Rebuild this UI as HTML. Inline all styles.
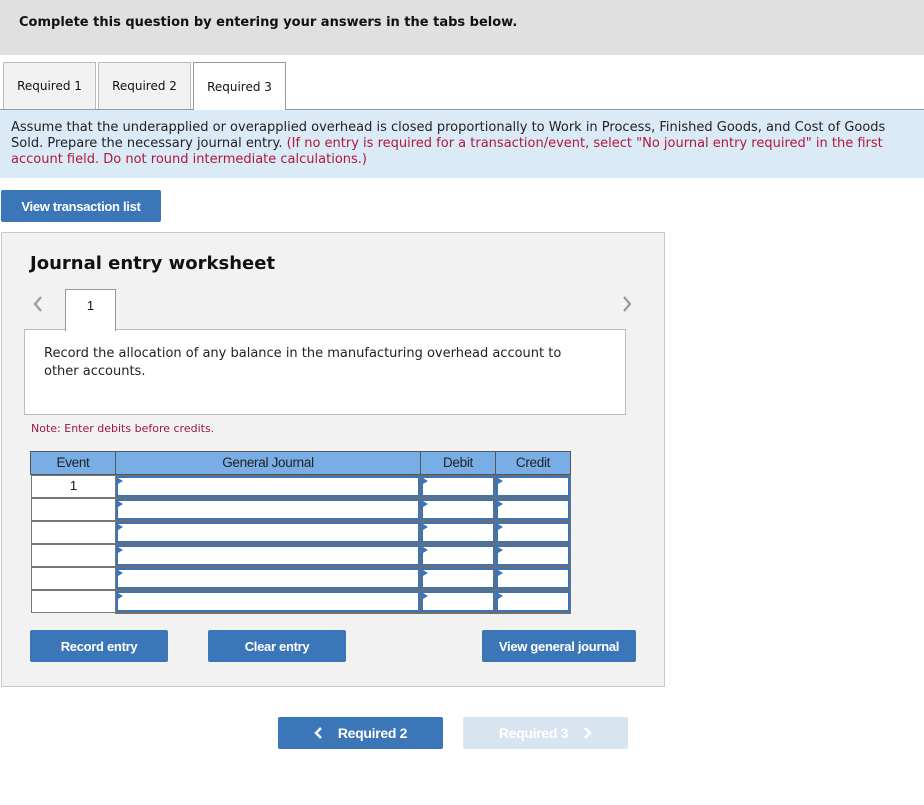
<!DOCTYPE html>
<html><head><meta charset="utf-8"><style>
*{box-sizing:border-box;margin:0;padding:0}
body{width:924px;height:805px;background:#fff;font-family:"DejaVu Sans","Liberation Sans",sans-serif;position:relative;overflow:hidden;color:#111}
.a{position:absolute}
.btn{position:absolute;background:#3a76b8;color:#fff;font-family:"Liberation Sans",sans-serif;font-weight:bold;font-size:13px;border-radius:2px;display:flex;align-items:center;justify-content:center;letter-spacing:-0.3px}
.tab{position:absolute;top:62px;height:47px;border:1px solid #bbb;border-bottom:none;background:#f2f2f2;font-size:12px;display:flex;align-items:center;justify-content:center}
.ev{position:absolute;left:31px;width:85px;height:23px;background:#fff;border:1px solid #777;font-family:"Liberation Sans",sans-serif;font-size:13px;text-align:center;line-height:20px}
.in{position:absolute;height:21px;background:#fff;border:2px solid #3d74b6}
.in:before{content:"";position:absolute;left:0;top:0;border-left:5px solid #3d74b6;border-top:3px solid transparent;border-bottom:3px solid transparent}
.th{position:absolute;top:451px;height:24px;background:#78ade6;border:1px solid #555;font-family:"Liberation Sans",sans-serif;font-size:13.5px;letter-spacing:-0.3px;text-align:center;line-height:22px;color:#222}
</style></head><body>
<div class="a" style="left:0;top:0;width:924px;height:55px;background:#e0e0e0"></div>
<div class="a" style="left:19px;top:15px;font-size:13px;font-weight:bold;color:#111">Complete this question by entering your answers in the tabs below.</div>
<div class="tab" style="left:3px;width:93px">Required 1</div>
<div class="tab" style="left:98px;width:93px">Required 2</div>
<div class="tab" style="left:193px;width:93px;background:#fff;border-color:#999;height:48px;z-index:2">Required 3</div>
<div class="a" style="left:0;top:109px;width:924px;height:69px;background:#dbeaf7;border-top:1px solid #999"></div>
<div class="a" style="left:11px;top:120px;width:905px;font-size:13px;line-height:16px;color:#222">Assume that the underapplied or overapplied overhead is closed proportionally to Work in Process, Finished Goods, and Cost of Goods Sold. Prepare the necessary journal entry. <span style="color:#b0183c">(If no entry is required for a transaction/event, select "No journal entry required" in the first account field. Do not round intermediate calculations.)</span></div>
<div class="btn" style="left:1px;top:190px;width:160px;height:32px">View transaction list</div>
<div class="a" style="left:1px;top:232px;width:664px;height:455px;background:#f2f2f2;border:1px solid #c8c8c8"></div>
<div class="a" style="left:30px;top:253px;font-size:18px;font-weight:bold;color:#111">Journal entry worksheet</div>
<svg class="a" style="left:32px;top:295px" width="12" height="18"><path d="M9 2 L3 9 L9 16" fill="none" stroke="#999" stroke-width="2.2"/></svg>
<svg class="a" style="left:621px;top:295px" width="12" height="18"><path d="M3 2 L9 9 L3 16" fill="none" stroke="#999" stroke-width="2.2"/></svg>
<div class="a" style="left:24px;top:329px;width:602px;height:86px;background:#fff;border:1px solid #bbb"></div>
<div class="a" style="left:65px;top:289px;width:51px;height:42px;background:#fff;border:1px solid #999;border-bottom:none;font-family:'Liberation Sans',sans-serif;font-size:13px;text-align:center;line-height:32px">1</div>
<div class="a" style="left:44px;top:345px;width:540px;font-size:13px;line-height:18px;color:#222">Record the allocation of any balance in the manufacturing overhead account to other accounts.</div>
<div class="a" style="left:31px;top:422px;font-size:11px;color:#a0183c">Note: Enter debits before credits.</div>
<div class="th" style="left:30px;width:86px">Event</div>
<div class="th" style="left:115px;width:306px">General Journal</div>
<div class="th" style="left:420px;width:76px">Debit</div>
<div class="th" style="left:495px;width:76px">Credit</div>
<div class="a" style="left:115px;top:475px;width:456px;height:139px;background:#6e6e6e"></div>
<div class="ev" style="top:475px">1</div>
<div class="ev" style="top:498px"></div>
<div class="ev" style="top:521px"></div>
<div class="ev" style="top:544px"></div>
<div class="ev" style="top:567px"></div>
<div class="ev" style="top:590px"></div>
<div class="in" style="left:116px;top:476px;width:304px"></div><div class="in" style="left:421px;top:476px;width:74px"></div><div class="in" style="left:496px;top:476px;width:74px"></div>
<div class="in" style="left:116px;top:499px;width:304px"></div><div class="in" style="left:421px;top:499px;width:74px"></div><div class="in" style="left:496px;top:499px;width:74px"></div>
<div class="in" style="left:116px;top:522px;width:304px"></div><div class="in" style="left:421px;top:522px;width:74px"></div><div class="in" style="left:496px;top:522px;width:74px"></div>
<div class="in" style="left:116px;top:545px;width:304px"></div><div class="in" style="left:421px;top:545px;width:74px"></div><div class="in" style="left:496px;top:545px;width:74px"></div>
<div class="in" style="left:116px;top:568px;width:304px"></div><div class="in" style="left:421px;top:568px;width:74px"></div><div class="in" style="left:496px;top:568px;width:74px"></div>
<div class="in" style="left:116px;top:591px;width:304px"></div><div class="in" style="left:421px;top:591px;width:74px"></div><div class="in" style="left:496px;top:591px;width:74px"></div>
<div class="btn" style="left:30px;top:630px;width:138px;height:32px">Record entry</div>
<div class="btn" style="left:208px;top:630px;width:138px;height:32px">Clear entry</div>
<div class="btn" style="left:482px;top:630px;width:154px;height:32px">View general journal</div>
<div class="btn" style="left:278px;top:717px;width:165px;height:32px;font-size:14px"><svg width="10" height="14" style="margin-right:14px"><path d="M7 2 L2 7 L7 12" fill="none" stroke="#fff" stroke-width="2.5"/></svg>Required 2</div>
<div class="btn" style="left:463px;top:717px;width:165px;height:32px;font-size:14px;background:#d9e4f1">Required 3<svg width="10" height="14" style="margin-left:14px"><path d="M3 2 L8 7 L3 12" fill="none" stroke="#fff" stroke-width="2.5"/></svg></div>
</body></html>
